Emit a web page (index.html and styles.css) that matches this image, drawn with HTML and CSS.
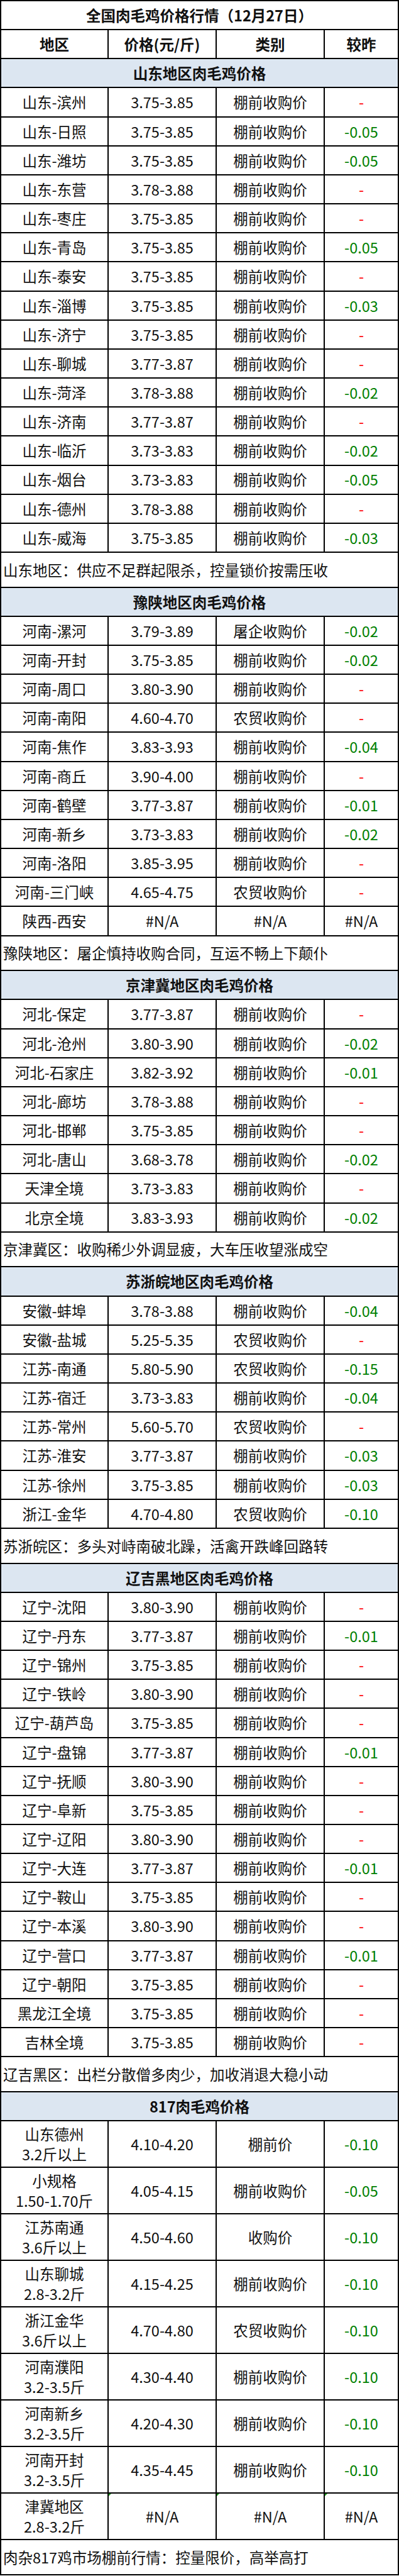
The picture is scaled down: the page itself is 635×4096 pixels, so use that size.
FILE: index.html
```html
<!DOCTYPE html>
<html lang="zh-CN">
<head>
<meta charset="utf-8">
<title>全国肉毛鸡价格行情</title>
<link rel="stylesheet" href="styles.css">
</head>
<body>
<div class="sheet">
  <div class="row title"><div class="c span">全国肉毛鸡价格行情（12月27日）</div></div>
  <div class="row head"><div class="c">地区</div><div class="c">价格(元/斤)</div><div class="c">类别</div><div class="c">较昨</div></div>

  <div class="row sec"><div class="c span">山东地区肉毛鸡价格</div></div>
  <div class="row"><div class="c">山东-滨州</div><div class="c">3.75-3.85</div><div class="c">棚前收购价</div><div class="c up">-</div></div>
  <div class="row"><div class="c">山东-日照</div><div class="c">3.75-3.85</div><div class="c">棚前收购价</div><div class="c dn">-0.05</div></div>
  <div class="row"><div class="c">山东-潍坊</div><div class="c">3.75-3.85</div><div class="c">棚前收购价</div><div class="c dn">-0.05</div></div>
  <div class="row"><div class="c">山东-东营</div><div class="c">3.78-3.88</div><div class="c">棚前收购价</div><div class="c up">-</div></div>
  <div class="row"><div class="c">山东-枣庄</div><div class="c">3.75-3.85</div><div class="c">棚前收购价</div><div class="c up">-</div></div>
  <div class="row"><div class="c">山东-青岛</div><div class="c">3.75-3.85</div><div class="c">棚前收购价</div><div class="c dn">-0.05</div></div>
  <div class="row"><div class="c">山东-泰安</div><div class="c">3.75-3.85</div><div class="c">棚前收购价</div><div class="c up">-</div></div>
  <div class="row"><div class="c">山东-淄博</div><div class="c">3.75-3.85</div><div class="c">棚前收购价</div><div class="c dn">-0.03</div></div>
  <div class="row"><div class="c">山东-济宁</div><div class="c">3.75-3.85</div><div class="c">棚前收购价</div><div class="c up">-</div></div>
  <div class="row"><div class="c">山东-聊城</div><div class="c">3.77-3.87</div><div class="c">棚前收购价</div><div class="c up">-</div></div>
  <div class="row"><div class="c">山东-菏泽</div><div class="c">3.78-3.88</div><div class="c">棚前收购价</div><div class="c dn">-0.02</div></div>
  <div class="row"><div class="c">山东-济南</div><div class="c">3.77-3.87</div><div class="c">棚前收购价</div><div class="c up">-</div></div>
  <div class="row"><div class="c">山东-临沂</div><div class="c">3.73-3.83</div><div class="c">棚前收购价</div><div class="c dn">-0.02</div></div>
  <div class="row"><div class="c">山东-烟台</div><div class="c">3.73-3.83</div><div class="c">棚前收购价</div><div class="c dn">-0.05</div></div>
  <div class="row"><div class="c">山东-德州</div><div class="c">3.78-3.88</div><div class="c">棚前收购价</div><div class="c up">-</div></div>
  <div class="row"><div class="c">山东-威海</div><div class="c">3.75-3.85</div><div class="c">棚前收购价</div><div class="c dn">-0.03</div></div>
  <div class="row note"><div class="c span">山东地区：供应不足群起限杀，控量锁价按需压收</div></div>

  <div class="row sec"><div class="c span">豫陕地区肉毛鸡价格</div></div>
  <div class="row"><div class="c">河南-漯河</div><div class="c">3.79-3.89</div><div class="c">屠企收购价</div><div class="c dn">-0.02</div></div>
  <div class="row"><div class="c">河南-开封</div><div class="c">3.75-3.85</div><div class="c">棚前收购价</div><div class="c dn">-0.02</div></div>
  <div class="row"><div class="c">河南-周口</div><div class="c">3.80-3.90</div><div class="c">棚前收购价</div><div class="c up">-</div></div>
  <div class="row"><div class="c">河南-南阳</div><div class="c">4.60-4.70</div><div class="c">农贸收购价</div><div class="c up">-</div></div>
  <div class="row"><div class="c">河南-焦作</div><div class="c">3.83-3.93</div><div class="c">棚前收购价</div><div class="c dn">-0.04</div></div>
  <div class="row"><div class="c">河南-商丘</div><div class="c">3.90-4.00</div><div class="c">棚前收购价</div><div class="c up">-</div></div>
  <div class="row"><div class="c">河南-鹤壁</div><div class="c">3.77-3.87</div><div class="c">棚前收购价</div><div class="c dn">-0.01</div></div>
  <div class="row"><div class="c">河南-新乡</div><div class="c">3.73-3.83</div><div class="c">棚前收购价</div><div class="c dn">-0.02</div></div>
  <div class="row"><div class="c">河南-洛阳</div><div class="c">3.85-3.95</div><div class="c">棚前收购价</div><div class="c up">-</div></div>
  <div class="row"><div class="c">河南-三门峡</div><div class="c">4.65-4.75</div><div class="c">农贸收购价</div><div class="c up">-</div></div>
  <div class="row"><div class="c">陕西-西安</div><div class="c">#N/A</div><div class="c">#N/A</div><div class="c">#N/A</div></div>
  <div class="row note"><div class="c span">豫陕地区：屠企慎持收购合同，互运不畅上下颠仆</div></div>

  <div class="row sec"><div class="c span">京津冀地区肉毛鸡价格</div></div>
  <div class="row"><div class="c">河北-保定</div><div class="c">3.77-3.87</div><div class="c">棚前收购价</div><div class="c up">-</div></div>
  <div class="row"><div class="c">河北-沧州</div><div class="c">3.80-3.90</div><div class="c">棚前收购价</div><div class="c dn">-0.02</div></div>
  <div class="row"><div class="c">河北-石家庄</div><div class="c">3.82-3.92</div><div class="c">棚前收购价</div><div class="c dn">-0.01</div></div>
  <div class="row"><div class="c">河北-廊坊</div><div class="c">3.78-3.88</div><div class="c">棚前收购价</div><div class="c up">-</div></div>
  <div class="row"><div class="c">河北-邯郸</div><div class="c">3.75-3.85</div><div class="c">棚前收购价</div><div class="c up">-</div></div>
  <div class="row"><div class="c">河北-唐山</div><div class="c">3.68-3.78</div><div class="c">棚前收购价</div><div class="c dn">-0.02</div></div>
  <div class="row"><div class="c">天津全境</div><div class="c">3.73-3.83</div><div class="c">棚前收购价</div><div class="c up">-</div></div>
  <div class="row"><div class="c">北京全境</div><div class="c">3.83-3.93</div><div class="c">棚前收购价</div><div class="c dn">-0.02</div></div>
  <div class="row note"><div class="c span">京津冀区：收购稀少外调显疲，大车压收望涨成空</div></div>

  <div class="row sec"><div class="c span">苏浙皖地区肉毛鸡价格</div></div>
  <div class="row"><div class="c">安徽-蚌埠</div><div class="c">3.78-3.88</div><div class="c">棚前收购价</div><div class="c dn">-0.04</div></div>
  <div class="row"><div class="c">安徽-盐城</div><div class="c">5.25-5.35</div><div class="c">农贸收购价</div><div class="c up">-</div></div>
  <div class="row"><div class="c">江苏-南通</div><div class="c">5.80-5.90</div><div class="c">农贸收购价</div><div class="c dn">-0.15</div></div>
  <div class="row"><div class="c">江苏-宿迁</div><div class="c">3.73-3.83</div><div class="c">棚前收购价</div><div class="c dn">-0.04</div></div>
  <div class="row"><div class="c">江苏-常州</div><div class="c">5.60-5.70</div><div class="c">农贸收购价</div><div class="c up">-</div></div>
  <div class="row"><div class="c">江苏-淮安</div><div class="c">3.77-3.87</div><div class="c">棚前收购价</div><div class="c dn">-0.03</div></div>
  <div class="row"><div class="c">江苏-徐州</div><div class="c">3.75-3.85</div><div class="c">棚前收购价</div><div class="c dn">-0.03</div></div>
  <div class="row"><div class="c">浙江-金华</div><div class="c">4.70-4.80</div><div class="c">农贸收购价</div><div class="c dn">-0.10</div></div>
  <div class="row note"><div class="c span">苏浙皖区：多头对峙南破北躁，活禽开跌峰回路转</div></div>

  <div class="row sec"><div class="c span">辽吉黑地区肉毛鸡价格</div></div>
  <div class="row"><div class="c">辽宁-沈阳</div><div class="c">3.80-3.90</div><div class="c">棚前收购价</div><div class="c up">-</div></div>
  <div class="row"><div class="c">辽宁-丹东</div><div class="c">3.77-3.87</div><div class="c">棚前收购价</div><div class="c dn">-0.01</div></div>
  <div class="row"><div class="c">辽宁-锦州</div><div class="c">3.75-3.85</div><div class="c">棚前收购价</div><div class="c up">-</div></div>
  <div class="row"><div class="c">辽宁-铁岭</div><div class="c">3.80-3.90</div><div class="c">棚前收购价</div><div class="c up">-</div></div>
  <div class="row"><div class="c">辽宁-葫芦岛</div><div class="c">3.75-3.85</div><div class="c">棚前收购价</div><div class="c up">-</div></div>
  <div class="row"><div class="c">辽宁-盘锦</div><div class="c">3.77-3.87</div><div class="c">棚前收购价</div><div class="c dn">-0.01</div></div>
  <div class="row"><div class="c">辽宁-抚顺</div><div class="c">3.80-3.90</div><div class="c">棚前收购价</div><div class="c up">-</div></div>
  <div class="row"><div class="c">辽宁-阜新</div><div class="c">3.75-3.85</div><div class="c">棚前收购价</div><div class="c up">-</div></div>
  <div class="row"><div class="c">辽宁-辽阳</div><div class="c">3.80-3.90</div><div class="c">棚前收购价</div><div class="c up">-</div></div>
  <div class="row"><div class="c">辽宁-大连</div><div class="c">3.77-3.87</div><div class="c">棚前收购价</div><div class="c dn">-0.01</div></div>
  <div class="row"><div class="c">辽宁-鞍山</div><div class="c">3.75-3.85</div><div class="c">棚前收购价</div><div class="c up">-</div></div>
  <div class="row"><div class="c">辽宁-本溪</div><div class="c">3.80-3.90</div><div class="c">棚前收购价</div><div class="c up">-</div></div>
  <div class="row"><div class="c">辽宁-营口</div><div class="c">3.77-3.87</div><div class="c">棚前收购价</div><div class="c dn">-0.01</div></div>
  <div class="row"><div class="c">辽宁-朝阳</div><div class="c">3.75-3.85</div><div class="c">棚前收购价</div><div class="c up">-</div></div>
  <div class="row"><div class="c">黑龙江全境</div><div class="c">3.75-3.85</div><div class="c">棚前收购价</div><div class="c up">-</div></div>
  <div class="row"><div class="c">吉林全境</div><div class="c">3.75-3.85</div><div class="c">棚前收购价</div><div class="c up">-</div></div>
  <div class="row note"><div class="c span">辽吉黑区：出栏分散僧多肉少，加收消退大稳小动</div></div>

  <div class="row sec"><div class="c span">817肉毛鸡价格</div></div>
  <div class="row tall"><div class="c two">山东德州<br>3.2斤以上</div><div class="c">4.10-4.20</div><div class="c">棚前价</div><div class="c dn">-0.10</div></div>
  <div class="row tall"><div class="c two">小规格<br>1.50-1.70斤</div><div class="c">4.05-4.15</div><div class="c">棚前收购价</div><div class="c dn">-0.05</div></div>
  <div class="row tall"><div class="c two">江苏南通<br>3.6斤以上</div><div class="c">4.50-4.60</div><div class="c">收购价</div><div class="c dn">-0.10</div></div>
  <div class="row tall"><div class="c two">山东聊城<br>2.8-3.2斤</div><div class="c">4.15-4.25</div><div class="c">棚前收购价</div><div class="c dn">-0.10</div></div>
  <div class="row tall"><div class="c two">浙江金华<br>3.6斤以上</div><div class="c">4.70-4.80</div><div class="c">农贸收购价</div><div class="c dn">-0.10</div></div>
  <div class="row tall"><div class="c two">河南濮阳<br>3.2-3.5斤</div><div class="c">4.30-4.40</div><div class="c">棚前收购价</div><div class="c dn">-0.10</div></div>
  <div class="row tall"><div class="c two">河南新乡<br>3.2-3.5斤</div><div class="c">4.20-4.30</div><div class="c">棚前收购价</div><div class="c dn">-0.10</div></div>
  <div class="row tall"><div class="c two">河南开封<br>3.2-3.5斤</div><div class="c">4.35-4.45</div><div class="c">棚前收购价</div><div class="c dn">-0.10</div></div>
  <div class="row tall"><div class="c two">津冀地区<br>2.8-3.2斤</div><div class="c flag">#N/A</div><div class="c flag">#N/A</div><div class="c flag">#N/A</div></div>
  <div class="row note"><div class="c span">肉杂817鸡市场棚前行情：控量限价，高举高打</div></div>
</div>
</body>
</html>
```

FILE: styles.css
```css
html, body {
  margin: 0;
  padding: 0;
  background: #ffffff;
}

.sheet {
  width: 635px;
  box-sizing: border-box;
  border-left: 2px solid #000;
  border-top: 2px solid #000;
  font-family: "Noto Sans CJK SC", "Microsoft YaHei", sans-serif;
  font-size: 23.5px;
  color: #111;
}

.row {
  display: grid;
  grid-template-columns: 171px 172px 172px 118px;
  height: 46.16px;
  box-sizing: border-box;
  border-bottom: 2px solid #000;
}

.c {
  display: flex;
  align-items: center;
  justify-content: center;
  text-align: center;
  border-right: 2px solid #000;
  white-space: nowrap;
  line-height: 1.2;
  position: relative;
}

.c.span {
  grid-column: 1 / -1;
}

.title .c,
.head .c,
.sec .c {
  font-weight: 700;
}

.sec {
  background: #dce6f1;
}

.note {
  height: 55.74px;
}

.note .c {
  justify-content: flex-start;
  padding-left: 3px;
}

.tall {
  height: 74px;
}

.two {
  line-height: 32px;
}

.up {
  color: #ff0000;
}

.dn {
  color: #008000;
}

.flag::before {
  content: "";
  position: absolute;
  left: 0;
  top: 0;
  border-top: 4px solid #1a9a1a;
  border-right: 4px solid transparent;
}
```
